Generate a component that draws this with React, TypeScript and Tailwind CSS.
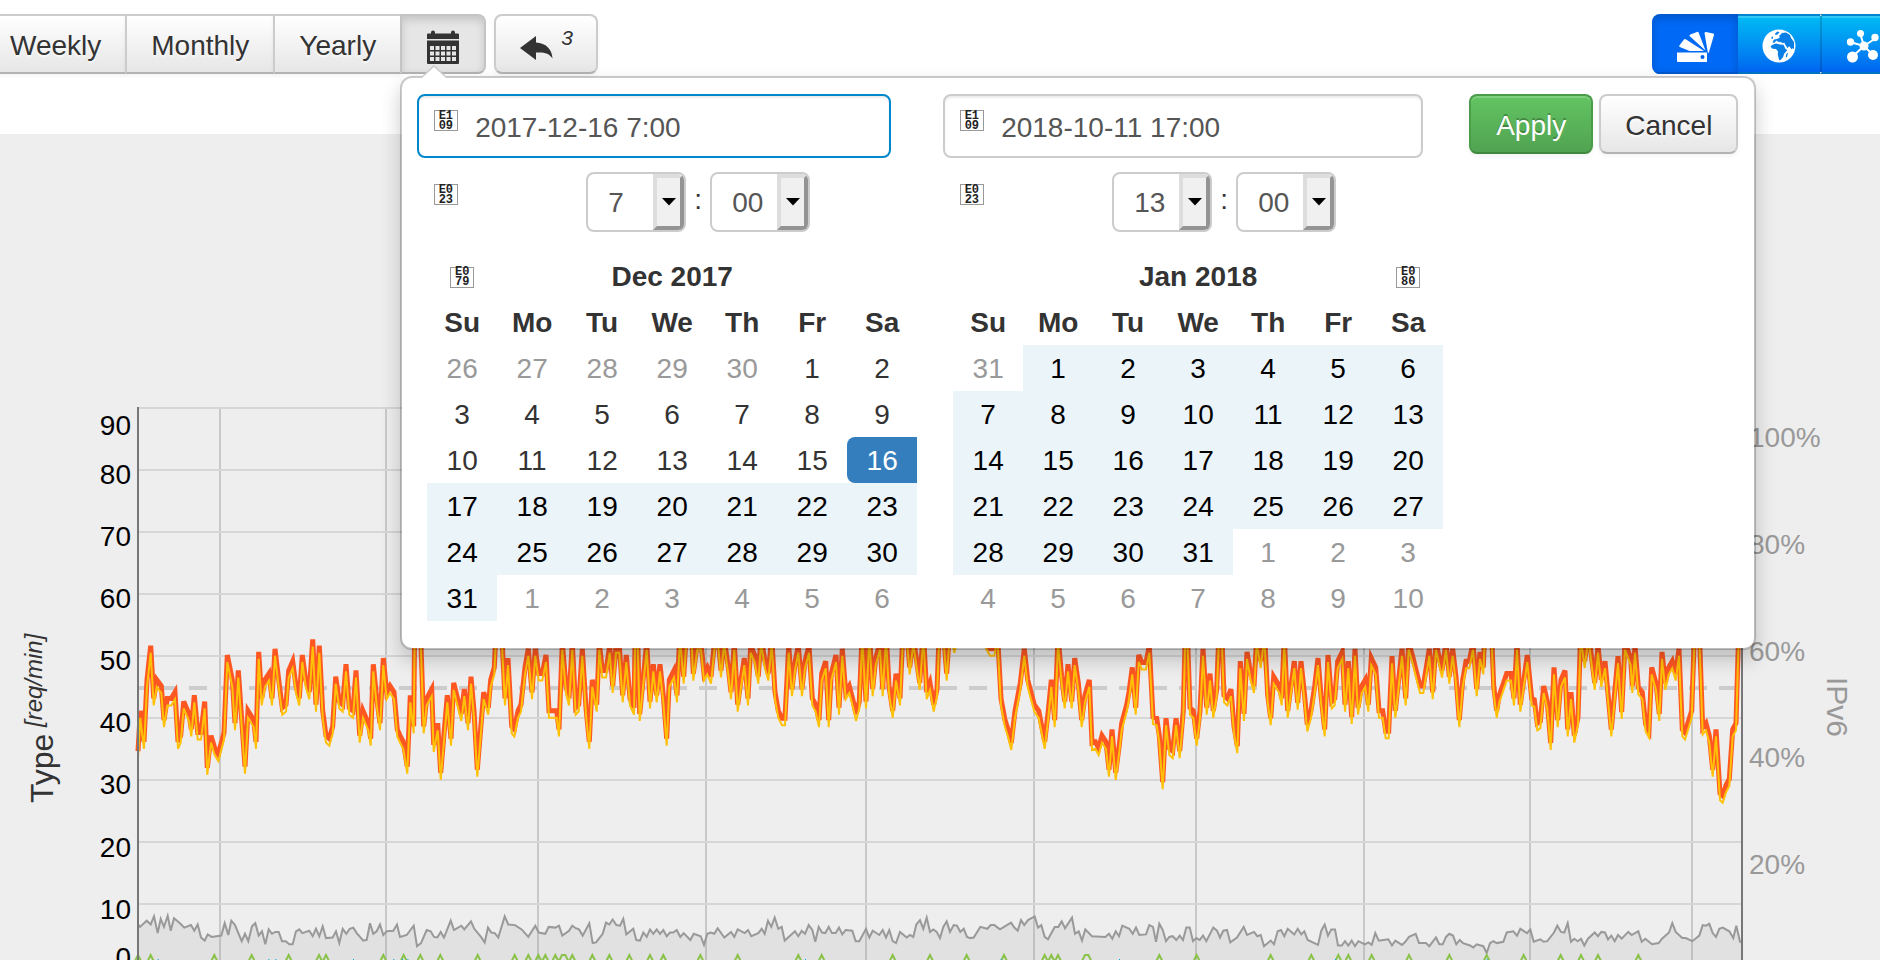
import { useState } from 'react';

type Point = [number, number];

// One chart unit on the x axis is a third of a pixel, segments start at `from`.
const REQUESTS = [
    {
        from: -414,
        points: '414:34.5 421:41 432:36 441:46 452:51.5 461:43 470:46 484:45 492:39.5 502:43 514:43 525:44 534:36 542:37 551:42.5 567:40.5 574:38 583:43.5 593:37.5 603:37.5 614:42.5 622:31.8 633:37 644:35 655:34 672:37.5 682:50 697:46 705:39 715:47.5 735:32 744:41 761:39.5 768:36 776:50.5 785:43 795:46 807:47 816:43 825:51 836:46 847:41.5 858:42 866:47.5 878:49 888:45 898:43 907:50 917:46 928:44 938:52.5 948:42 958:51.5 968:41 978:37 988:36.5 998:38.5 1007:46.5 1018:42.5 1028:42 1038:48.5 1048:41.5 1059:41 1068:47.5 1079:37 1089:41 1105:39 1112:36.5 1120:48.5 1130:43 1140:39 1150:49.5 1160:44 1170:45 1182:44 1192:38',
    },
    {
        from: 786,
        points: '0:37 10:36 22:32 31:43.5 41:38.5 45:60 58:60 71:38.5 80:43 95:44.5 101:35.5 113:39 122:31 142:43.5 153:36.5 161:45.5 184:40.5 193:44.5 204:39 213:46.5 222:41 232:31.5 251:44 265:41.5 272:46 283:48 289:55 304:55 315:43 324:49.5 335:38.5 343:38 354:41 363:42 375:48 385:51 396:44 406:51 416:47 427:47 438:50 447:41 460:41 470:41 477:38 487:52 498:45 507:43 517:52 527:41.5 536:42 547:51 558:41.5 568:36 577:46 590:42 598:52 607:47.5 618:47.5 629:51.5 638:45 648:51.5 658:51.5 668:43.5 679:50 690:43 702:41.5 706:55 712:55 719:40.5 740:52 750:42.5 760:48.5 770:43.5 780:48.5 790:43.5 800:36.5 808:46 822:47.5 831:43.5 840:54 851:46.5 862:56 875:53 880:47 892:52 903:52 912:47 922:48 933:46.5 945:53 954:53 963:47.5 972:53 985:48 993:44 1003:52 1013:42 1023:46 1033:49.5 1044:43 1052:51.5 1064:50 1075:46.5 1083:53 1095:49 1105:47 1115:53 1125:44 1135:41 1146:39.8 1155:39.8 1166:51.5 1176:44.5 1186:49 1195:51.5 1206:44.5 1215:49 1227:51.5 1237:43 1247:42 1257:39.5 1265:47 1277:49 1286:39.5 1294:47 1308:50 1317:41.5 1327:51 1337:44 1348:45 1360:42.5 1368:40.5 1378:42.5 1387:54 1398:42.5 1408:54 1418:44.5 1427:49.5 1440:52 1448:44.5 1458:54 1467:45 1478:41 1488:47',
    },
    {
        from: 2286,
        points: '0:43 8:53 20:54 29:48 40:53 59:45.5 70:54 80:44 90:45.5 101:42 111:44.5 118:54 130:54 140:47 150:55 163:51.5 178:55 190:55 200:54 225:55 250:53 270:51 283:51 292:54 303:43 315:39.5 324:38 334:35.8 345:41 361:45.5 373:51 383:46 403:42 416:41 434:36 445:41 454:46 464:39.5 474:53 485:46.5 494:42.5 504:48.5 515:42.5 524:49.5 535:45.5 545:39.5 555:43.5 568:46 576:35.8 586:36 596:35 606:37 618:36 627:31.5 636:38 647:31 658:35.5 665:39 680:42 687:44 697:48 707:41.5 716:50 726:48.8 738:48.8 748:51.5 759:40 770:39.8 778:37 788:29.5 798:39.8 808:35 818:34.5 828:39.8 839:34.5 850:41 856:54 862:54 870:41.5 880:41 890:36.5 900:41 909:51 920:41.5 930:47 940:41 950:44.5 957:54 965:54 972:43.5 982:43 993:44.5 1002:38.5 1012:35.3 1021:49 1032:40.5 1041:50.5 1052:47 1062:45 1070:53 1082:49 1093:54 1103:43.5 1112:39.8 1121:46.5 1138:45 1145:43 1153:53 1163:41 1173:45 1183:49 1193:42.3 1203:49 1213:44 1222:38.8 1233:41 1244:45 1254:49.5 1263:43.5 1274:38 1284:50 1295:42.5 1304:43 1313:49 1327:50.5 1335:42 1345:49 1355:40 1365:51 1374:41.5 1385:45 1396:46 1405:42 1414:49.5 1427:48 1437:41',
    },
    {
        from: 3726,
        points: '0:41 8:41 17:37.7 26:37.7 36:49.8 46:41 66:51 77:43 86:52 97:50 120:45 130:45 148:51 158:44 168:52 186:47.5 198:52 208:46.5 218:51 228:46.5 238:39.5 248:46 258:49 268:49 279:52 290:44.5 300:50.5 310:48 316:56 333:56 341:45 350:41 358:43.5 380:47 393:47 402:43 411:52 421:42 442:50 455:43 463:42.8 472:39 481:39.3 491:45 502:42.5 512:35.8 522:48 533:39.5 543:46 555:47.5 563:38 573:44 583:37 594:40 602:54 614:49 625:54 644:45.5 654:51.5 664:46 675:49 694:38 714:49.8 725:40.8 735:52 752:49.5 757:45 765:51.5 775:44.8 787:44 797:38.8 807:37.8 815:48 828:45.5 838:40.5 846:50.5 856:45.5 866:48 877:49 887:47 897:51 907:38 915:37.5 935:41 945:56 958:54 968:38.3 978:39 988:37 998:31.5 1008:38 1020:27.7 1028:27.3 1038:29 1048:30 1058:38 1068:39 1076:54 1083:54',
    },
];

const IPV6 = [
    {
        from: -414,
        points: '414:6.7 420:6.3 440:7.3 452:6.7 462:8 473:5.3 482:7.6 492:6.3 503:8.1 512:5.7 522:7.7 540:6.9 553:6.2 573:6.6 583:5.7 593:6.7 603:4.6 614:4.1 623:5.1 635:4.7 664:4.9 674:6.9 685:5 694:7.3 705:6.6 725:4 735:5.2 745:4 756:6.4 766:6.9 776:4.9 786:5.6 796:3.5 806:5.9 816:5.2 826:5.5 836:5.5 846:4 857:4 868:3.5 878:3.5 888:5.6 898:5.9 907:5.3 928:5.7 938:4.8 948:6 958:4.8 968:6.4 978:4.5 998:4.6 1008:5.6 1018:3.7 1028:6 1039:5.2 1049:6 1060:6.2 1070:5.3 1090:4.1 1100:4.2 1110:6.9 1120:5.2 1130:5.6 1140:6.7 1150:5 1160:5.6 1180:5.7 1191:6.7',
    },
    {
        from: 786,
        points: '0:4.7 20:5 41:6.5 51:3.2 63:3.7 80:5.8 92:5.6 102:4.7 112:4.6 122:5.5 132:4.6 152:7.3 162:5.8 184:6.5 193:5.9 213:7.2 223:6 243:4.7 254:3.8 264:6.2 274:5.4 284:5.3 295:4.6 314:8 325:6.7 345:6.6 365:5.9 385:4.7 406:6.5 416:5.4 436:5.2 446:6.3 466:6.2 477:6.5 487:4.9 507:5.7 517:6.5 527:6.1 537:5.9 548:4.9 568:6.9 578:3.7 588:3.8 608:5.2 618:7 628:6.7 638:7.5 649:6.6 660:6.5 670:7.6 679:5.1 700:6 709:4.2 720:4.1 730:5.4 740:4.7 750:5.9 760:5.2 770:5.9 780:5.2 790:5.8 800:4.8 810:5.4 820:5.4 830:5.8 841:4.7 851:5.3 871:4.2 881:5.2 902:4.8 912:3.4 922:5.2 932:5.4 943:5.2 953:6.1 973:4.6 993:5.5 1003:4.7 1013:5.9 1034:5.3 1044:5.8 1054:4.8 1075:5.3 1085:6 1094:5.2 1104:7.3 1114:6.3 1124:7.8 1135:6 1145:6.3 1154:4.1 1185:5.6 1195:4.8 1205:5.7 1215:5.2 1226:6.6 1237:5.8 1246:3.9 1256:6.3 1266:5.4 1276:5.3 1286:6.3 1296:5.3 1307:5.3 1317:6.2 1327:5.1 1337:5.8 1357:5.7 1367:4 1378:4 1398:6 1408:4.6 1418:5.7 1438:5 1448:5.8 1458:4.6 1468:5.8 1478:4 1488:3.7',
    },
    {
        from: 2286,
        points: '0:5.5 20:4.6 30:5 40:4.7 49:6.7 60:7.4 70:6 80:7.8 90:5.5 100:5.9 110:5.5 120:4.5 130:6.3 140:7.2 150:5.5 161:6.6 171:6.5 181:5.5 191:6 201:4.7 211:4.5 221:4.6 241:6.3 262:6 272:6.6 283:6.6 300:5.9 333:7 343:6.2 353:5.7 363:7.4 373:6.6 384:7.4 404:8 414:6.2 424:6.6 434:4.7 444:4.3 464:6.3 475:6.3 485:7.2 495:6.1 516:7.8 525:5.2 536:5.6 546:4.1 556:5.9 576:4.8 616:4.7 627:5.2 637:4.4 647:5.6 657:4.8 667:6.5 688:6 698:5.2 708:6.2 718:5 738:5.1 748:6.6 759:6.3 768:3.9 778:6.8 788:5.8 798:4 808:4.7 818:4.8 829:4.2 839:4.9 849:4.2 859:6.2 869:6.2 879:4 889:4.5 899:4.2 909:4.9 919:4 940:6.2 951:5.7 960:4.6 970:5.7 981:5.8 991:3.8 1011:4.6 1031:6.3 1041:5 1062:5.5 1072:4.8 1082:5 1092:3.2 1112:4.1 1122:3.5 1133:5.6 1143:5.8 1153:4.8 1163:6 1183:5.1 1193:6 1204:5.1 1213:5.6 1223:4.2 1254:3.4 1264:5.7 1274:6.7 1284:4.9 1294:5.9 1305:5.9 1314:3.3 1325:3.3 1335:4 1345:3.3 1355:4.1 1365:3.2 1375:4 1395:3.5 1405:3.8 1415:3.4 1426:5.3 1436:4.1',
    },
    {
        from: 3726,
        points: '0:4.1 25:4.3 36:3.3 46:4.1 66:3.4 76:3.9 87:4.7 107:5.2 117:3.7 138:3.7 148:3.2 168:4.6 178:3.5 188:3.5 198:4.7 208:5.2 219:4.9 229:3.5 239:4.2 249:3.7 270:3.3 280:3 290:3.5 310:3.2 320:2.1 330:3.7 340:4 350:3.7 370:3.9 380:5.4 400:5.6 411:4.9 421:6 441:5.3 451:5.9 461:3.9 481:4.3 491:3.9 502:4 522:5.4 532:6.5 543:5.5 553:5.4 563:6.9 573:3.9 583:4.4 593:4 603:4.4 613:3.3 624:4.4 644:5.4 654:4.8 664:5.5 675:5.4 684:4.3 694:4.9 704:4 714:5 725:4.4 745:5.5 755:5 765:5.3 775:5.6 785:3.9 796:4.4 816:3.5 836:3.7 846:4.4 867:5.4 877:6.9 887:5.5 907:4.5 917:4.5 937:4 958:4.9 968:6.6 978:6.5 988:6.8 998:5.3 1008:4.7 1018:6 1028:6.2 1048:5.6 1060:4.5 1069:6.5 1080:3.9 1087:3.9',
    },
];

// Positions of the single-request spikes on the bottom series
const SPIKES = [
    0, 38, 229, 341, 452, 543, 564, 736, 797, 847, 907, 1019, 1130, 1171, 1201,
    1222, 1252, 1272, 1282, 1303, 1363, 1414, 1474, 1536, 1576, 1687, 1799,
    1981, 2051, 2264, 2376, 2486, 2598, 2720, 2740, 2760, 2841, 2851, 3064,
    3176, 3398, 3520, 3601, 3631, 3701, 3813, 3934, 4046, 4157, 4268, 4329,
    4380, 4501,
];

const BLUE_DOTS = [473, 805, 826, 1059, 1180, 1206, 1222, 2415, 3002, 3357, 4005, 4460];

const LEFT = 138;
const RIGHT = 1742;
const BASE = 966;
const UNIT = 6.2;

function readSeries(segments: { from: number; points: string }[]): Point[] {
    return segments.flatMap(({ from, points }) =>
        points.split(' ').map((pair): Point => {
            const [x, value] = pair.split(':').map(Number);
            return [LEFT + (from + x) / 3, BASE - value * UNIT];
        })
    );
}

function toPolyline(points: Point[], dy = 0) {
    return points.map(([x, y]) => `${x.toFixed(1)},${(y + dy).toFixed(1)}`).join(' ');
}

const requests = readSeries(REQUESTS);
const ipv6 = readSeries(IPV6);

// Neighbouring spikes share one flat top
const spikes = SPIKES.map((s, i) => {
    const x = LEFT + s / 3;
    const up = SPIKES[i - 1] > s - 12 ? '' : `${x - 3},961`;
    const down = SPIKES[i + 1] < s + 12 ? '' : `${x + 3},961`;
    return `${up} ${x},955 ${down}`;
}).join(' ');

const Y_LABELS = [
    [90, 435],
    [80, 484],
    [70, 546],
    [60, 608],
    [50, 670],
    [40, 732],
    [30, 794],
    [20, 857],
    [10, 919],
    [0, 967],
];

const PERCENT_LABELS = [
    ['100%', 447],
    ['80%', 554],
    ['60%', 661],
    ['40%', 767],
    ['20%', 874],
];

function Chart() {
    return (
        <svg viewBox="0 134 1880 826" className="block w-full bg-[#eee]" fontSize="28">
            {[220, 386, 538, 706, 866, 1034, 1196, 1364, 1530, 1692].map((x) => (
                <line key={x} x1={x} x2={x} y1="407" y2="960" stroke="#c8c8c8" strokeWidth="2" />
            ))}
            {[0, 1, 2, 3, 4, 5, 6, 7, 8].map((i) => (
                <line key={i} x1={LEFT} x2={RIGHT} y1={408 + i * 62} y2={408 + i * 62} stroke="#d6d6d6" strokeWidth="2" />
            ))}
            <line x1="129" x2={RIGHT} y1="688" y2="688" stroke="#ccc" strokeWidth="4" strokeDasharray="18 12" />
            <rect x="120" y="680" width="17" height="16" fill="#eee" />
            <polygon points={`${LEFT},966 ${toPolyline(ipv6)} ${RIGHT},966`} fill="#999" fillOpacity="0.15" />
            <polyline points={toPolyline(ipv6)} fill="none" stroke="#999" strokeWidth="2" />
            <polyline points={toPolyline(requests, -1)} fill="none" stroke="#ff5722" strokeWidth="5" />
            <polyline points={toPolyline(requests, 6)} fill="none" stroke="#ffc107" strokeWidth="2" />
            <polyline points={`${LEFT},961 ${spikes} ${RIGHT},961`} fill="none" stroke="#8bc34a" strokeWidth="2" />
            {BLUE_DOTS.map((d) => (
                <rect key={d} x={LEFT + (d - 414) / 3} y="959" width="1" height="1" fill="#03a9f4" />
            ))}
            <line x1={LEFT} x2={LEFT} y1="407" y2="960" stroke="#777" strokeWidth="2" />
            <line x1={RIGHT} x2={RIGHT} y1="407" y2="960" stroke="#777" strokeWidth="2" />
            {Y_LABELS.map(([label, y]) => (
                <text key={label} x="131" y={y} textAnchor="end" fill="#000">
                    {label}
                </text>
            ))}
            {PERCENT_LABELS.map(([label, y]) => (
                <text key={label} x="1749" y={y} fill="#999">
                    {label}
                </text>
            ))}
            <text transform="translate(53 803) rotate(-90)" fontSize="32" fill="#333">
                Type
            </text>
            <text transform="translate(42 727) rotate(-90)" fontSize="24" fontStyle="italic" fill="#333">
                [req/min]
            </text>
            <text transform="translate(1827 677) rotate(90)" fontSize="30" fill="#999">
                IPv6
            </text>
        </svg>
    );
}

// Fallback box for icon font characters that are missing
function CodeBox({ code }: { code: string }) {
    return (
        <span className="flex h-[21px] w-6 items-center justify-center border border-[#999] font-['Liberation_Mono'] text-[12px] leading-[10px] font-bold text-[#222]">
            <span className="w-[15px] break-all">{code}</span>
        </span>
    );
}

const grayButton =
    'h-[60px] border-2 border-[#ccc] border-b-[#b3b3b3] bg-linear-to-b from-white to-[#e6e6e6] pt-1 text-[#333] shadow-[0_2px_4px_rgba(0,0,0,0.05)] [text-shadow:0_2px_2px_rgba(255,255,255,0.75)]';

function CalendarIcon() {
    return (
        <svg width="34" height="34" viewBox="0 0 34 34" fill="#333">
            <path d="M1 4.500a1 1 0 0 1 1-1h3V2.500a2 2 0 0 1 4 0v1h16v-1a2 2 0 0 1 4 0v1h3a1 1 0 0 1 1 1V9H1z" />
            <path
                fillRule="evenodd"
                d="M1 10.500h32V33a1 1 0 0 1-1 1H2a1 1 0 0 1-1-1zM4 16v4h4v-4zm5.500 0v4h4v-4zm5.500 0v4h4v-4zm5.500 0v4h4v-4zm5.500 0v4h4v-4zM4 21.500v4h4v-4zm5.500 0v4h4v-4zm5.500 0v4h4v-4zm5.500 0v4h4v-4zm5.500 0v4h4v-4zM4 27v4h4v-4zm5.500 0v4h4v-4zm5.500 0v4h4v-4zm5.500 0v4h4v-4zm5.500 0v4h4v-4z"
            />
        </svg>
    );
}

function SwatchesIcon() {
    return (
        <svg width="38" height="32" viewBox="0 0 38 32" fill="#fff">
            <path d="M1 21.500h30V31H2a1 1 0 0 1-1-1z" />
            <path d="M28.500 2q.3-1.200 1.500-1l7 1.500q1.200.4 1 1.500L33 21l-1 1.500z" />
            <path d="M13.500 5q-.3-1 .8-1.500L21 .9q1.200-.4 1.700.8L29.500 19.500z" />
            <path d="M3.300 14.500l4.700-6q.8-.8 1.700-.2L28 20H13.500L3.800 16q-1-.6-.5-1.500z" />
            <circle cx="26.500" cy="26" r="2" fill="#0060e6" />
        </svg>
    );
}

function GlobeIcon() {
    return (
        <svg width="34" height="34" viewBox="0 0 34 34">
            <circle cx="17" cy="17" r="16.500" fill="#fff" />
            <g fill="#0a7fe6">
                <path d="M10 16l4-1.500 4 1 3.500.3 2 4.200 1.800 1-3.300 4-.8 3-2.600 3-1.400.3-1.400-5.300.2-3.500-2-2.500-3.500-.3-2-2z" />
                <path d="M12 10.500l-1.500 3 2 .3 2-2.300 2.800 2 .5-1 2.700 1.500 2-.2.5 1.500 2.500 3.800 1.800-1.800 2.200 3 1-1 1.500.7V13L29 9l-1-3-4-2.500-4 .4-3 3 1 1.500-3 1.500z" />
                <path d="M13 4.500l2.500-2 2 .7-2 2.300-2 .5zM9.500 8l1.500-.5v2l-1.500.5zM24 26l1.400-2.500.5 1-1 3.500-1.100.4z" />
            </g>
        </svg>
    );
}

function HubIcon() {
    return (
        <svg width="34" height="34" viewBox="0 0 34 34" fill="#fff" stroke="#fff" strokeWidth="2">
            <path d="M18 17L14 4M18 17L4 13M18 17l12-8M18 17L6 28M18 17l9 9" />
            <g stroke="none">
                <circle cx="18" cy="17" r="4.500" />
                <circle cx="14.500" cy="4.500" r="3.500" />
                <circle cx="4.500" cy="13" r="3.700" />
                <circle cx="29" cy="8.500" r="3.700" />
                <circle cx="6.500" cy="28" r="5.500" />
                <circle cx="27" cy="26" r="5" />
            </g>
        </svg>
    );
}

const blueButton =
    'flex h-[60px] items-center justify-center border-t-2 border-b-2 border-t-[#0086cf] border-b-[#0072c4] bg-linear-to-b from-[#00bbf3] to-[#0064f0] pt-1 shadow-[inset_0_2px_0_rgba(255,255,255,0.2)]';

function TimeSelect({ label, value, options }: { label: string; value: string; options: string[] }) {
    const [current, setCurrent] = useState(value);

    return (
        <span className="relative block h-[60px] w-[100px] overflow-hidden rounded-[8px] border-2 border-[#ccc] bg-white">
            <select
                aria-label={label}
                value={current}
                onChange={(e) => setCurrent(e.target.value)}
                className="h-full w-full appearance-none pt-0.5 pl-5 text-[#555] outline-none"
            >
                {options.map((o) => (
                    <option key={o}>{o}</option>
                ))}
            </select>
            <span className="pointer-events-none absolute inset-y-0 right-0 flex w-[31px] items-center justify-center border-4 border-t-[#ddd] border-r-[#949494] border-b-[#949494] border-l-[#ddd] bg-[#f0f0f0]">
                <svg width="14" height="8" viewBox="0 0 14 8">
                    <path d="M0 0h14L7 7.500z" fill="#000" />
                </svg>
            </span>
        </span>
    );
}

type Day = { day: number; kind: 'off' | 'plain' | 'range' | 'start' };

function buildDays(before: number[], count: number, rangeFrom: number, start?: number): Day[][] {
    const days: Day[] = before.map((day) => ({ day, kind: 'off' }));
    for (let day = 1; day <= count; day++) {
        days.push({ day, kind: day === start ? 'start' : day >= rangeFrom ? 'range' : 'plain' });
    }
    for (let day = 1; days.length < 42; day++) {
        days.push({ day, kind: 'off' });
    }
    return [0, 1, 2, 3, 4, 5].map((w) => days.slice(w * 7, w * 7 + 7));
}

const dayStyles = {
    off: 'pt-0.5 text-[#999]',
    plain: 'pt-0.5 text-[#333]',
    range: 'bg-[#ebf4f8] pt-0.5 text-black',
    start: 'rounded-l-[8px] bg-[#357ebd] pt-0.5 text-white',
};

function Picker({
    inputLabel,
    input,
    active,
    hour,
    month,
    weeks,
    prev,
    next,
}: {
    inputLabel: string;
    input: string;
    active?: boolean;
    hour: string;
    month: string;
    weeks: Day[][];
    prev?: boolean;
    next?: boolean;
}) {
    return (
        <div className="w-[501px]">
            <div className={active ? 'relative w-[474px]' : 'relative w-[480px]'}>
                <input
                    type="text"
                    aria-label={inputLabel}
                    defaultValue={input}
                    className={`block h-16 w-full rounded-[8px] border-2 bg-white pt-1 pl-14 text-[#555] shadow-[inset_0_2px_2px_rgba(0,0,0,0.075)] outline-none ${
                        active ? 'border-[#08c]' : 'border-[#ccc]'
                    }`}
                />
                <span className="absolute top-4 left-[17px]">
                    <CodeBox code="E109" />
                </span>
            </div>
            <div className="mt-[14px] flex pl-[17px]">
                <div className="mt-3">
                    <CodeBox code="E023" />
                </div>
                <div className="ml-32 flex">
                    <TimeSelect label="Hour" value={hour} options={['7', '13', '17']} />
                    <span className="w-6 pt-2 text-center text-[#333]">:</span>
                    <TimeSelect label="Minute" value="00" options={['00', '30']} />
                </div>
            </div>
            <table className="mt-[21px] ml-[10px] w-[490px] table-fixed border-collapse text-center">
                <thead className="text-[#333]">
                    <tr className="h-[46px]">
                        <th className="pt-0.5">
                            {prev && (
                                <button aria-label="Previous month" className="block px-[23px]">
                                    <CodeBox code="E079" />
                                </button>
                            )}
                        </th>
                        <th colSpan={5} className="pt-0.5">
                            {month}
                        </th>
                        <th className="pt-0.5">
                            {next && (
                                <button aria-label="Next month" className="block px-[23px]">
                                    <CodeBox code="E080" />
                                </button>
                            )}
                        </th>
                    </tr>
                    <tr className="h-[46px]">
                        {['Su', 'Mo', 'Tu', 'We', 'Th', 'Fr', 'Sa'].map((d) => (
                            <th key={d} className="pt-0.5">
                                {d}
                            </th>
                        ))}
                    </tr>
                </thead>
                <tbody>
                    {weeks.map((week, i) => (
                        <tr key={i} className="h-[46px]">
                            {week.map(({ day, kind }, j) => (
                                <td key={j} className={dayStyles[kind]}>
                                    {day}
                                </td>
                            ))}
                        </tr>
                    ))}
                </tbody>
            </table>
        </div>
    );
}

function RangePopup() {
    return (
        <div className="absolute top-[62px] left-0 z-10 flex w-max gap-[25px] rounded-[12px] border-2 border-black/20 bg-white bg-clip-padding pt-4 pr-4 pb-[27px] pl-[15px] shadow-[0_10px_20px_rgba(0,0,0,0.2)]">
            <svg className="absolute -top-[13px] left-[18px]" width="28" height="14" viewBox="0 0 28 14">
                <path d="M0 13L14 0l14 13z" fill="#ccc" />
                <path d="M1 14L14 2l13 12z" fill="#fff" />
            </svg>
            <Picker
                inputLabel="Start"
                input="2017-12-16 7:00"
                active
                hour="7"
                month="Dec 2017"
                weeks={buildDays([26, 27, 28, 29, 30], 31, 17, 16)}
                prev
            />
            <Picker
                inputLabel="End"
                input="2018-10-11 17:00"
                hour="13"
                month="Jan 2018"
                weeks={buildDays([31], 31, 1)}
                next
            />
            <div className="flex items-start gap-[6px]">
                <button className="h-[60px] rounded-[8px] border-2 border-[#4a9c4a] border-b-[#3f8a3f] bg-linear-to-b from-[#62c462] to-[#51a351] px-[25px] pt-1 text-white shadow-[inset_0_2px_0_rgba(255,255,255,0.2),0_2px_4px_rgba(0,0,0,0.05)] [text-shadow:0_-2px_0_rgba(0,0,0,0.25)]">
                    Apply
                </button>
                <button className={`${grayButton} rounded-[8px] px-6`}>Cancel</button>
            </div>
        </div>
    );
}

export default function App() {
    return (
        <div className="overflow-hidden bg-white font-['Liberation_Sans',Arial,sans-serif] text-[28px] leading-10">
            <header className="flex h-[134px] items-start justify-between pt-[14px]">
                <div className="-ml-4 flex">
                    <button className={`${grayButton} px-6`}>Weekly</button>
                    <button className={`${grayButton} -ml-[2px] px-6`}>Monthly</button>
                    <button className={`${grayButton} -ml-[2px] px-6`}>Yearly</button>
                    <div className="relative -ml-[2px]">
                        <button
                            aria-label="Custom range"
                            className="flex h-[60px] w-[86px] items-center justify-center rounded-r-[8px] border-2 border-[#c4c4c4] border-b-[#b3b3b3] bg-[#e6e6e6] pt-1.5 shadow-[inset_0_4px_8px_rgba(0,0,0,0.15)]"
                        >
                            <CalendarIcon />
                        </button>
                        <RangePopup />
                    </div>
                    <button aria-label="Undo, 3 steps" className={`${grayButton} ml-2 flex w-[104px] rounded-[8px] pl-6`}>
                        <svg className="mt-4" width="33" height="24" viewBox="0 0 33 24" fill="#333">
                            <path d="M0 12L16 0v6.500c10 .5 16 6.500 16.500 16C29 17 24 16 16 16.500V24z" />
                        </svg>
                        <span className="ml-2 text-[21px] leading-9 italic">3</span>
                    </button>
                </div>
                <div className="-mr-[24px] flex overflow-hidden rounded-l-[8px]">
                    <button
                        aria-label="Types"
                        className="flex h-[60px] w-[86px] items-center justify-center border-b-2 border-[#0057cc] bg-[#0069f5] pt-2 shadow-[inset_0_4px_8px_rgba(0,0,0,0.2)]"
                    >
                        <SwatchesIcon />
                    </button>
                    <button aria-label="Countries" className={`${blueButton} w-[82px]`}>
                        <GlobeIcon />
                    </button>
                    <button aria-label="Network" className={`${blueButton} w-[84px] border-l-2 border-l-black/15`}>
                        <HubIcon />
                    </button>
                </div>
            </header>
            <Chart />
        </div>
    );
}
